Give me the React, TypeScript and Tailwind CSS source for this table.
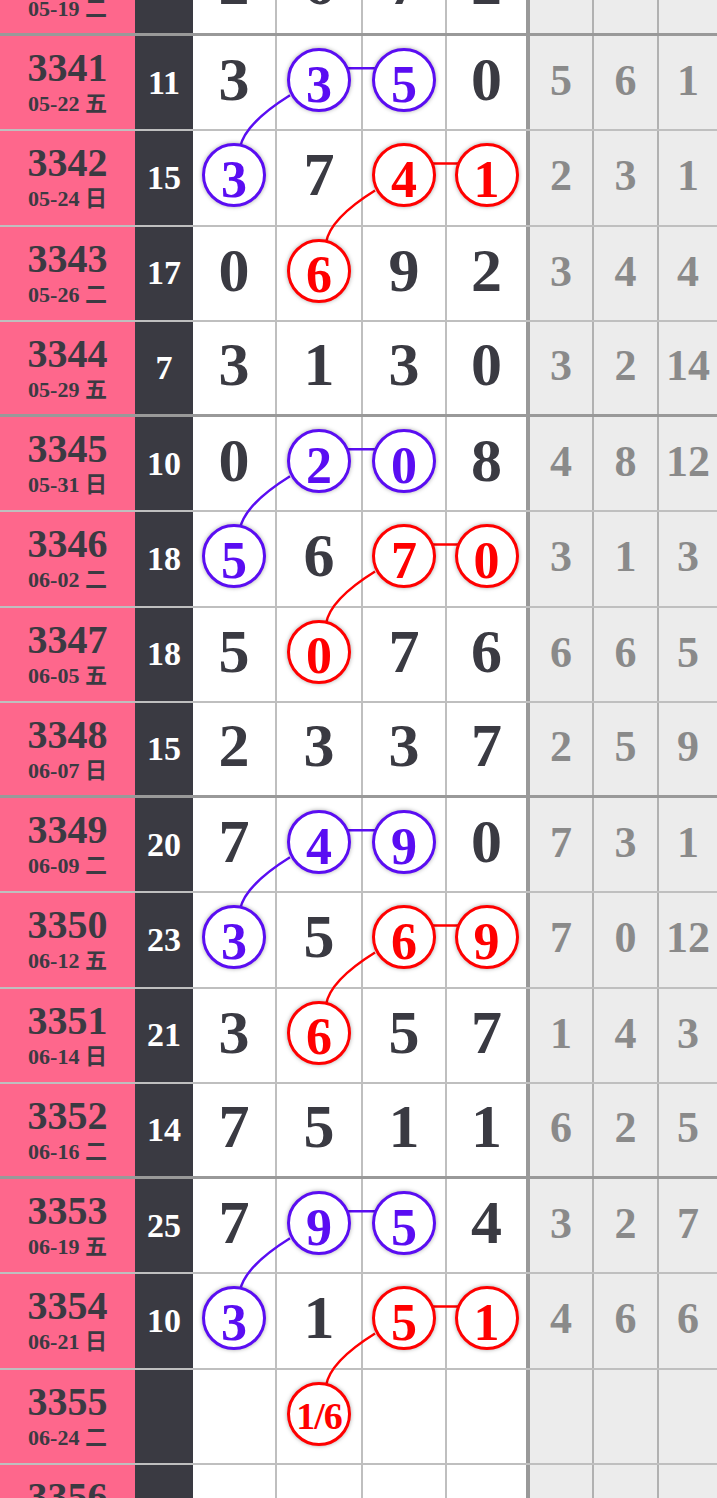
import React from "react";

type Row = { p: string; d: string; s: string; n: string[]; g: string[] };

const rows: Row[] = [
  { p: "3340", d: "05-19 二", s: "17", n: ["2", "6", "7", "2"], g: ["3", "9", "12"] },
  { p: "3341", d: "05-22 五", s: "11", n: ["3", "3", "5", "0"], g: ["5", "6", "1"] },
  { p: "3342", d: "05-24 日", s: "15", n: ["3", "7", "4", "1"], g: ["2", "3", "1"] },
  { p: "3343", d: "05-26 二", s: "17", n: ["0", "6", "9", "2"], g: ["3", "4", "4"] },
  { p: "3344", d: "05-29 五", s: "7", n: ["3", "1", "3", "0"], g: ["3", "2", "14"] },
  { p: "3345", d: "05-31 日", s: "10", n: ["0", "2", "0", "8"], g: ["4", "8", "12"] },
  { p: "3346", d: "06-02 二", s: "18", n: ["5", "6", "7", "0"], g: ["3", "1", "3"] },
  { p: "3347", d: "06-05 五", s: "18", n: ["5", "0", "7", "6"], g: ["6", "6", "5"] },
  { p: "3348", d: "06-07 日", s: "15", n: ["2", "3", "3", "7"], g: ["2", "5", "9"] },
  { p: "3349", d: "06-09 二", s: "20", n: ["7", "4", "9", "0"], g: ["7", "3", "1"] },
  { p: "3350", d: "06-12 五", s: "23", n: ["3", "5", "6", "9"], g: ["7", "0", "12"] },
  { p: "3351", d: "06-14 日", s: "21", n: ["3", "6", "5", "7"], g: ["1", "4", "3"] },
  { p: "3352", d: "06-16 二", s: "14", n: ["7", "5", "1", "1"], g: ["6", "2", "5"] },
  { p: "3353", d: "06-19 五", s: "25", n: ["7", "9", "5", "4"], g: ["3", "2", "7"] },
  { p: "3354", d: "06-21 日", s: "10", n: ["3", "1", "5", "1"], g: ["4", "6", "6"] },
  { p: "3355", d: "06-24 二", s: "", n: ["", "1/6", "", ""], g: ["", "", ""] },
  { p: "3356", d: "06-26 五", s: "", n: ["", "", "", ""], g: ["", "", ""] },
];

const groupStarts = [1, 5, 9, 13];
const RH = 95.25;
const CX = [234, 319, 404, 486.5];
const BLUE = "#5a0df2";
const RED = "#ff0000";

function markOf(i: number, c: number): "b" | "r" | null {
  for (const g of groupStarts) {
    if (i === g && (c === 1 || c === 2)) return "b";
    if (i === g + 1 && c === 0) return "b";
    if (i === g + 1 && (c === 2 || c === 3)) return "r";
    if (i === g + 2 && c === 1) return "r";
  }
  return null;
}

const FONT = {
  fontFamily: '"Liberation Serif", "Noto Sans CJK SC", serif',
};

function Lines() {
  const segs: React.ReactNode[] = [];
  groupStarts.forEach((g, k) => {
    const top = (r: number) => r * RH;
    const cy = (r: number) => top(r) + 44.5;
    // blue horizontal
    segs.push(
      <line key={`bh${k}`} x1={CX[1]} y1={top(g) + 32} x2={CX[2]} y2={top(g) + 32} stroke={BLUE} strokeWidth={2.5} />
    );
    // blue curve
    {
      const sx = CX[1] - 29, sy = cy(g) + 14.5;
      const ex = CX[0] + 6, ey = cy(g + 1) - 28.5;
      segs.push(
        <path key={`bc${k}`} d={`M${sx} ${sy} Q${sx - 45} ${sy + 28} ${ex} ${ey}`} fill="none" stroke={BLUE} strokeWidth={2.5} />
      );
    }
    // red horizontal
    segs.push(
      <line key={`rh${k}`} x1={CX[2]} y1={top(g + 1) + 32} x2={CX[3]} y2={top(g + 1) + 32} stroke={RED} strokeWidth={2.5} />
    );
    {
      const sx = CX[2] - 29, sy = cy(g + 1) + 14.5;
      const ex = CX[1] + 7, ey = cy(g + 2) - 28.5;
      segs.push(
        <path key={`rc${k}`} d={`M${sx} ${sy} Q${sx - 45} ${sy + 28} ${ex} ${ey}`} fill="none" stroke={RED} strokeWidth={2.5} />
      );
    }
  });
  return (
    <svg className="absolute left-0 top-0 pointer-events-none" width={717} height={rows.length * RH}>
      {segs}
    </svg>
  );
}

function NumCell({ v, mark, last }: { v: string; mark: "b" | "r" | null; last: boolean }) {
  const border = last ? "border-r-4 border-black/40" : "border-r-2 border-black/25";
  if (mark) {
    const color = mark === "b" ? "border-[#5a0df2] text-[#5a0df2]" : "border-[#ff0000] text-[#ff0000]";
    const small = v.length > 1;
    return (
      <div className={`flex justify-center bg-white ${border}`}>
        <div
          className={`relative z-10 mt-[12px] flex h-16 w-16 items-center justify-center rounded-full border-[3px] bg-white shadow-[0_0_4px_rgba(0,0,0,0.35)] ${color}`}
        >
          <span
            className={`font-bold leading-none ${small ? "pt-[4px] text-[38px] tracking-[-1px]" : "pt-[9px] text-[52px]"}`}
          >
            {v}
          </span>
        </div>
      </div>
    );
  }
  return (
    <div className={`flex items-center justify-center bg-white pb-[7px] ${border}`}>
      <span className="text-[62px] font-bold leading-none text-[#3a3a42]">{v}</span>
    </div>
  );
}

export default function App() {
  return (
    <div className="h-[1498px] w-[717px] overflow-hidden bg-white" style={FONT}>
      <div className="relative -mt-[59.25px]">
        {rows.map((r, i) => {
          const groupEnd = i % 4 === 0;
          return (
            <div
              key={r.p}
              className={`grid h-[95.25px] grid-cols-[135px_58px_84px_86px_84px_83px_64px_65px_58px] ${
                groupEnd ? "border-b-[3px] border-black/40" : "border-b-2 border-black/25"
              }`}
            >
              <div className="flex flex-col items-center bg-[#fe678c] pt-[12px] text-[#3b3a42]">
                <span className="text-[40px] font-bold leading-[40px]">{r.p}</span>
                <span className="mt-[5px] text-[22px] font-bold leading-[22px]">{r.d}</span>
              </div>
              <div className="flex items-center justify-center bg-[#3a3a42] text-white">
                <span className="text-[34px] font-bold leading-none">{r.s}</span>
              </div>
              {r.n.map((v, c) => (
                <NumCell key={c} v={v} mark={markOf(i, c)} last={c === 3} />
              ))}
              {r.g.map((v, c) => (
                <div
                  key={c}
                  className={`flex items-center justify-center bg-[#ececec] pb-[3px] ${
                    c < 2 ? "border-r-2 border-black/25" : ""
                  }`}
                >
                  <span className="text-[44px] font-bold leading-none text-[#8a8a8a]">{v}</span>
                </div>
              ))}
            </div>
          );
        })}
        <Lines />
      </div>
    </div>
  );
}
